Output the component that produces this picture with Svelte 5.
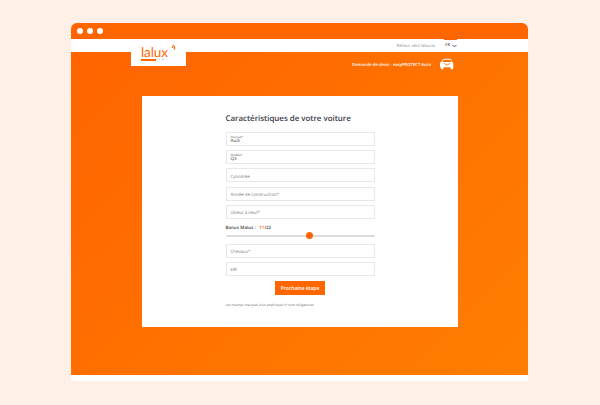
<script>
  const fieldsTop = [
    { label: 'Marque*', value: 'Audi' },
    { label: 'Modèle*', value: 'Q3' },
    { placeholder: 'Cylindrée' },
    { placeholder: 'Année de construction*' },
    { placeholder: 'Valeur à neuf*' }
  ];
  const fieldsBottom = [{ placeholder: 'Chevaux*' }, { placeholder: 'kW' }];
</script>

<div class="page">
  <div class="window">
    <div class="chrome">
      <span class="dot"></span><span class="dot"></span><span class="dot"></span>
    </div>
    <div class="topbar">
      <span class="back">Retour vers lalux.lu</span>
      <span class="lang">
        <span class="tab"></span>
        FR
        <svg width="5" height="4" viewBox="0 0 6 4"><path d="M.6.7 3 3.100 5.400.7" fill="none" stroke="#4a4a55" stroke-width="1.100"/></svg>
      </span>
    </div>
    <div class="hero">
      <div class="logo">
        <div class="wordmark">lalux<svg class="swoosh" width="6" height="6" viewBox="0 0 6 6"><path d="M2.500.7A2.600 2.600 0 0 0 4.800 4.400" fill="none" stroke="#ff6600" stroke-width="1.300" transform="rotate(190 3 3)"/><circle cx="1.300" cy="3.300" r=".8" fill="#ff6600"/></svg></div>
        <div class="tagline"><span class="bar"></span><span class="pt"></span><span class="pt"></span><span class="pt"></span></div>
      </div>
      <div class="quote">
        <span>Demande de devis - easyPROTECT Auto</span>
        <svg width="14" height="12" viewBox="0 0 15 12">
          <path d="M3 1.200Q3.300.5 4.200.5h6.600q.9 0 1.200.7l1 2.600q1.200.4 1.200 1.600v3.800q0 .4-.4.4H.4Q0 8.600 0 8.200V5.400q0-1.200 1.200-1.600Z" fill="#fff"/>
          <path d="M2.600 3.800 3.700 1.400h7.600l1.100 2.400Z" fill="#ff6e00"/>
          <path d="M4 5.200 7.500 7.200 11 5.200" fill="none" stroke="#ff6e00" stroke-width=".9"/>
          <rect x="1" y="9" width="2.600" height="2.600" rx=".5" fill="#fff"/>
          <rect x="11.400" y="9" width="2.600" height="2.600" rx=".5" fill="#fff"/>
        </svg>
      </div>
      <div class="card">
        <div class="form">
          <h1>Caractéristiques de votre voiture</h1>
          <div class="stack">
            {#each fieldsTop as f}
              <div class="field">
                {#if f.label}
                  <span class="mini">{f.label}</span>
                  <span class="value">{f.value}</span>
                {:else}
                  <span class="ph">{f.placeholder}</span>
                {/if}
              </div>
            {/each}
          </div>
          <div class="bonus">Bonus Malus : <b>11</b>/22</div>
          <div class="slider"><span class="thumb"></span></div>
          <div class="stack">
            {#each fieldsBottom as f}
              <div class="field"><span class="ph">{f.placeholder}</span></div>
            {/each}
          </div>
          <div class="actions"><button>Prochaine étape</button></div>
          <p class="note">Les champs marqués d'un astérisque (*) sont obligatoires</p>
        </div>
      </div>
    </div>
    <div class="foot"></div>
  </div>
</div>

<style>
  :global(body) { margin: 0; background: #fff0e7; }
  .page {
    width: 600px; height: 405px; box-sizing: border-box; overflow: hidden;
    padding: 23px 72px 0 71px;
    font-family: "Open Sans", "Liberation Sans", sans-serif;
    text-rendering: geometricPrecision;
  }
  .window { width: 457px; height: 358px; display: flex; flex-direction: column; position: relative; }
  .chrome {
    height: 16px; flex: none; background: #ff6600; border-radius: 6px 6px 0 0;
    display: flex; align-items: center; gap: 4px; padding-left: 6px; box-sizing: border-box;
  }
  .dot { width: 6px; height: 6px; border-radius: 50%; background: #fff; }
  .topbar {
    height: 13px; flex: none; background: #fff; display: flex; align-items: center;
    justify-content: flex-end; padding-right: 71px; gap: 10px; position: relative;
    font-size: 4.300px; color: #85858f;
  }
  .lang { position: relative; display: flex; align-items: center; gap: 2px; color: #3e3e4a; font-weight: 600; font-size: 4px; }
  .tab { position: absolute; left: -1px; top: -5px; width: 13px; height: 1.500px; background: #ff6600; }
  .hero {
    flex: 1; position: relative; display: flex; flex-direction: column; align-items: center;
    background: linear-gradient(135deg, #ff6400 0%, #ff7e00 100%);
  }
  .logo {
    position: absolute; left: 60px; top: 0; width: 55px; height: 27px; background: #fff;
    margin-top: -13px; box-sizing: border-box; padding: 8px 0 0 10px;
  }
  .wordmark {
    font-family: "Lato", "Open Sans", sans-serif; font-size: 13.500px; line-height: 10px;
    color: #ff6600; position: relative; letter-spacing: -.1px;
  }
  .swoosh { position: absolute; left: 30px; top: -3px; }
  .tagline { display: flex; align-items: center; gap: 2.500px; margin-top: 2px; }
  .bar { width: 15px; height: 1.500px; background: #ff6600; }
  .pt { width: 1.300px; height: 1.300px; background: #c9c9cf; border-radius: 50%; }
  .quote {
    align-self: flex-end; margin-right: 74px; height: 44px; box-sizing: border-box; padding-top: 6px;
    display: flex; align-items: flex-start; gap: 9px; color: #fff; font-size: 4.200px; font-weight: 600;
  }
  .quote span { line-height: 13px; padding-top: 1px; }
  .card {
    width: 316px; height: 231px; flex: none; background: #fff; box-sizing: border-box;
    padding: 18px 83px 0 84px;
  }
  h1 { margin: 0 0 7px; font-size: 7.900px; line-height: 11px; font-weight: 600; color: #3a3a4a; white-space: nowrap; }
  .stack { display: flex; flex-direction: column; gap: 4.200px; }
  .field {
    height: 14px; box-sizing: border-box; border: 1px solid #e8e8ea; background: #fff;
    display: flex; flex-direction: column; justify-content: center; padding: 2.500px 0 0 4px;
    color: #7d7d85; font-size: 4.400px; line-height: 6px;
  }
  .mini { font-size: 3px; line-height: 3px; color: #666; }
  .value { color: #3e3e4a; line-height: 5px; font-size: 4.500px; }
  .bonus { margin-top: 6px; height: 7px; font-size: 4.400px; line-height: 7px; color: #3e3e4a; font-weight: 600; word-spacing: .4px; }
  .bonus b { color: #ff6600; font-weight: 600; margin-left: 2px; }
  .slider { position: relative; height: 2px; background: #dcdcdf; margin: 3px 0 7px; border-radius: 1px; }
  .thumb { position: absolute; left: 80px; top: -2.500px; width: 7px; height: 7px; border-radius: 50%; background: #ff6600; }
  .actions { display: flex; justify-content: center; margin-top: 5px; }
  button {
    width: 50px; height: 14px; border: 0; padding: 0; background: #ff6600; color: #fff;
    font: 600 4.900px "Open Sans", sans-serif;
  }
  .note { margin: 7px 0 0; font-size: 3.300px; line-height: 5px; color: #6e6e78; white-space: nowrap; }
  .foot { height: 6px; flex: none; background: #fff; }
</style>
